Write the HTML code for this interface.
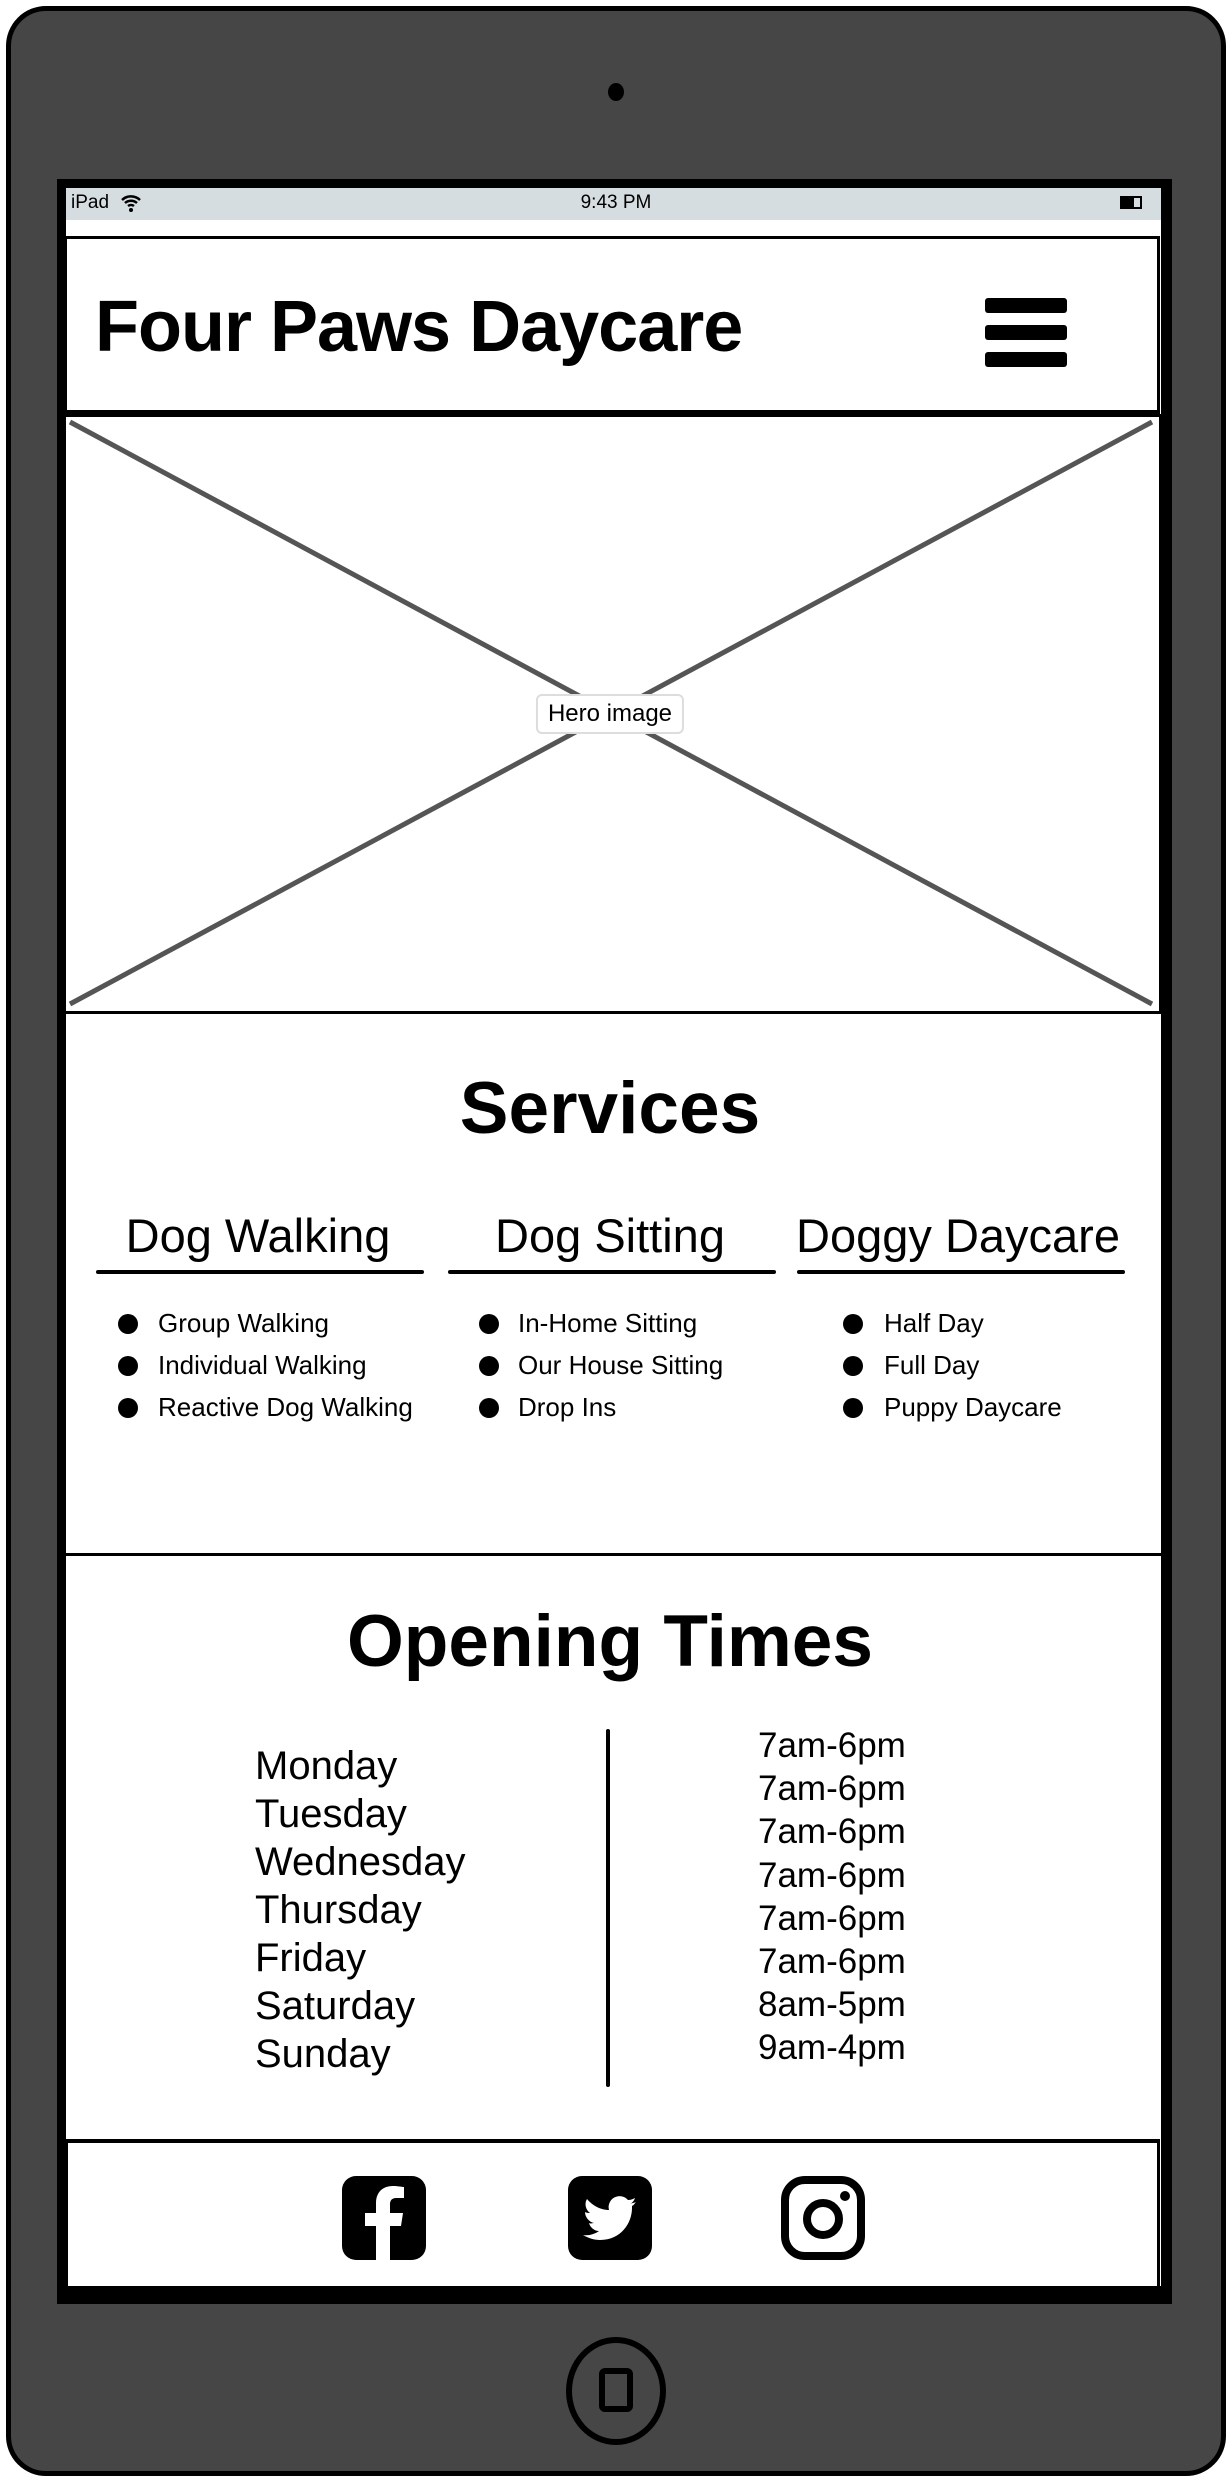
<!DOCTYPE html>
<html><head><meta charset="utf-8">
<style>
*{margin:0;padding:0;box-sizing:border-box}
body{width:1232px;height:2480px;background:#fff;position:relative;overflow:hidden;font-family:"Liberation Sans",sans-serif;color:#000}
.a{position:absolute}
.t{position:absolute;white-space:nowrap}
.c{transform:translateX(-50%)}
.dot{position:absolute;width:20px;height:20px;border-radius:50%;background:#000}
</style></head><body>
<div class="a" style="left:6px;top:6px;width:1220px;height:2470px;background:#464646;border:5px solid #000;border-radius:40px"></div>
<div class="a" style="left:608px;top:83px;width:16px;height:18px;border-radius:50%;background:#000"></div>
<div class="a" style="left:57px;top:179px;width:1115px;height:2125px;background:#000"></div>
<div class="a" style="left:66px;top:188px;width:1095px;height:2098px;background:#fff"></div>
<div class="a" style="left:66px;top:188px;width:1095px;height:32px;background:#d6dde0"></div>
<div class="t" style="left:71px;top:192px;font-size:19px">iPad</div>
<svg class="a" style="left:120px;top:192px" width="22" height="22" viewBox="0 0 22 22"><path d="M2 8a13 13 0 0 1 18 0M5 11a9 9 0 0 1 12 0M8 14a5 5 0 0 1 6 0" stroke="#000" stroke-width="2.5" fill="none"/><circle cx="11" cy="18" r="2" fill="#000"/></svg>
<div class="t c" style="left:616px;top:192px;font-size:19px">9:43 PM</div>
<div class="a" style="left:1120px;top:196px;width:22px;height:13px;border:2px solid #000"><div style="width:12px;height:9px;background:#000"></div></div>
<!-- header -->
<div class="a" style="left:64px;top:236px;width:1096px;height:178px;border:3px solid #000;border-bottom:4px solid #000"></div>
<div class="t" style="left:95px;top:286px;font-size:72px;font-weight:bold;letter-spacing:-1px">Four Paws Daycare</div>
<div class="a" style="left:985px;top:298px;width:82px;height:15px;background:#000;border-radius:3px"></div>
<div class="a" style="left:985px;top:325px;width:82px;height:15px;background:#000;border-radius:3px"></div>
<div class="a" style="left:985px;top:352px;width:82px;height:15px;background:#000;border-radius:3px"></div>
<!-- hero -->
<div class="a" style="left:62px;top:414px;width:1100px;height:600px;border:3px solid #000"></div>
<svg class="a" style="left:62px;top:414px" width="1100" height="600"><line x1="8" y1="8" x2="1090" y2="590" stroke="#555" stroke-width="5"/><line x1="1090" y1="8" x2="8" y2="590" stroke="#555" stroke-width="5"/></svg>
<div class="t c" style="left:610px;top:694px;font-size:24px;background:#fff;border:2px solid #ddd;border-radius:6px;padding:4px 10px">Hero image</div>
<!-- services -->
<div class="t c" style="left:610px;top:1067px;font-size:73px;font-weight:bold">Services</div>
<div class="t c" style="left:258px;top:1208px;font-size:47px">Dog Walking</div>
<div class="t c" style="left:610px;top:1208px;font-size:47px">Dog Sitting</div>
<div class="t c" style="left:958px;top:1208px;font-size:47px">Doggy Daycare</div>
<div class="a" style="left:96px;top:1270px;width:328px;height:4px;background:#000;border-radius:2px"></div>
<div class="a" style="left:448px;top:1270px;width:328px;height:4px;background:#000;border-radius:2px"></div>
<div class="a" style="left:797px;top:1270px;width:328px;height:4px;background:#000;border-radius:2px"></div>
<div class="dot" style="left:118px;top:1314px"></div><div class="t" style="left:158px;top:1308px;font-size:26px">Group Walking</div>
<div class="dot" style="left:118px;top:1356px"></div><div class="t" style="left:158px;top:1350px;font-size:26px">Individual Walking</div>
<div class="dot" style="left:118px;top:1398px"></div><div class="t" style="left:158px;top:1392px;font-size:26px">Reactive Dog Walking</div>
<div class="dot" style="left:479px;top:1314px"></div><div class="t" style="left:518px;top:1308px;font-size:26px">In-Home Sitting</div>
<div class="dot" style="left:479px;top:1356px"></div><div class="t" style="left:518px;top:1350px;font-size:26px">Our House Sitting</div>
<div class="dot" style="left:479px;top:1398px"></div><div class="t" style="left:518px;top:1392px;font-size:26px">Drop Ins</div>
<div class="dot" style="left:843px;top:1314px"></div><div class="t" style="left:884px;top:1308px;font-size:26px">Half Day</div>
<div class="dot" style="left:843px;top:1356px"></div><div class="t" style="left:884px;top:1350px;font-size:26px">Full Day</div>
<div class="dot" style="left:843px;top:1398px"></div><div class="t" style="left:884px;top:1392px;font-size:26px">Puppy Daycare</div>
<div class="a" style="left:64px;top:1553px;width:1098px;height:3px;background:#000"></div>
<!-- opening -->
<div class="t c" style="left:610px;top:1600px;font-size:73px;font-weight:bold">Opening Times</div>
<div class="a" style="left:255px;top:1742px;font-size:40px;line-height:48px">Monday<br>Tuesday<br>Wednesday<br>Thursday<br>Friday<br>Saturday<br>Sunday</div>
<div class="a" style="left:606px;top:1729px;width:4px;height:358px;background:#000;border-radius:2px"></div>
<div class="a" style="left:758px;top:1724px;font-size:35px;line-height:43.2px">7am-6pm<br>7am-6pm<br>7am-6pm<br>7am-6pm<br>7am-6pm<br>7am-6pm<br>8am-5pm<br>9am-4pm</div>
<!-- footer -->
<div class="a" style="left:64px;top:2139px;width:1096px;height:155px;border:4px solid #000;border-right:3px solid #000"></div>
<svg class="a" style="left:342px;top:2176px" width="84" height="84" viewBox="0 0 84 84"><rect width="84" height="84" rx="14" fill="#000"/><path d="M48 84V50h11l2-13H48v-8c0-4 1-7 7-7h7V11c-2 0-6-1-11-1-10 0-17 6-17 17v10H23v13h11v34z" fill="#fff"/></svg>
<svg class="a" style="left:568px;top:2176px" width="84" height="84" viewBox="0 0 84 84"><rect width="84" height="84" rx="14" fill="#000"/><path d="M68 26c-2 1-4 1-6 2 2-1 4-3 5-6-2 1-4 2-7 2a11 11 0 0 0-19 10c-9 0-17-5-22-11-3 5-1 11 3 14-2 0-3 0-5-1 0 5 4 10 9 11-2 0-3 1-5 0 1 4 5 8 10 8-4 3-10 5-16 4 5 3 11 5 17 5 21 0 32-17 32-32v-2c2-1 3-3 4-4z" fill="#fff"/></svg>
<svg class="a" style="left:781px;top:2176px" width="84" height="84" viewBox="0 0 84 84"><rect x="4" y="4" width="76" height="76" rx="20" fill="none" stroke="#000" stroke-width="8"/><circle cx="42" cy="43" r="16" fill="none" stroke="#000" stroke-width="8"/><circle cx="64" cy="20" r="5" fill="#000"/></svg>
<!-- home button -->
<div class="a" style="left:566px;top:2337px;width:100px;height:108px;border-radius:50%;border:6px solid #000"></div>
<div class="a" style="left:599px;top:2368px;width:34px;height:44px;border-radius:6px;border:6px solid #000"></div>
</body></html>
